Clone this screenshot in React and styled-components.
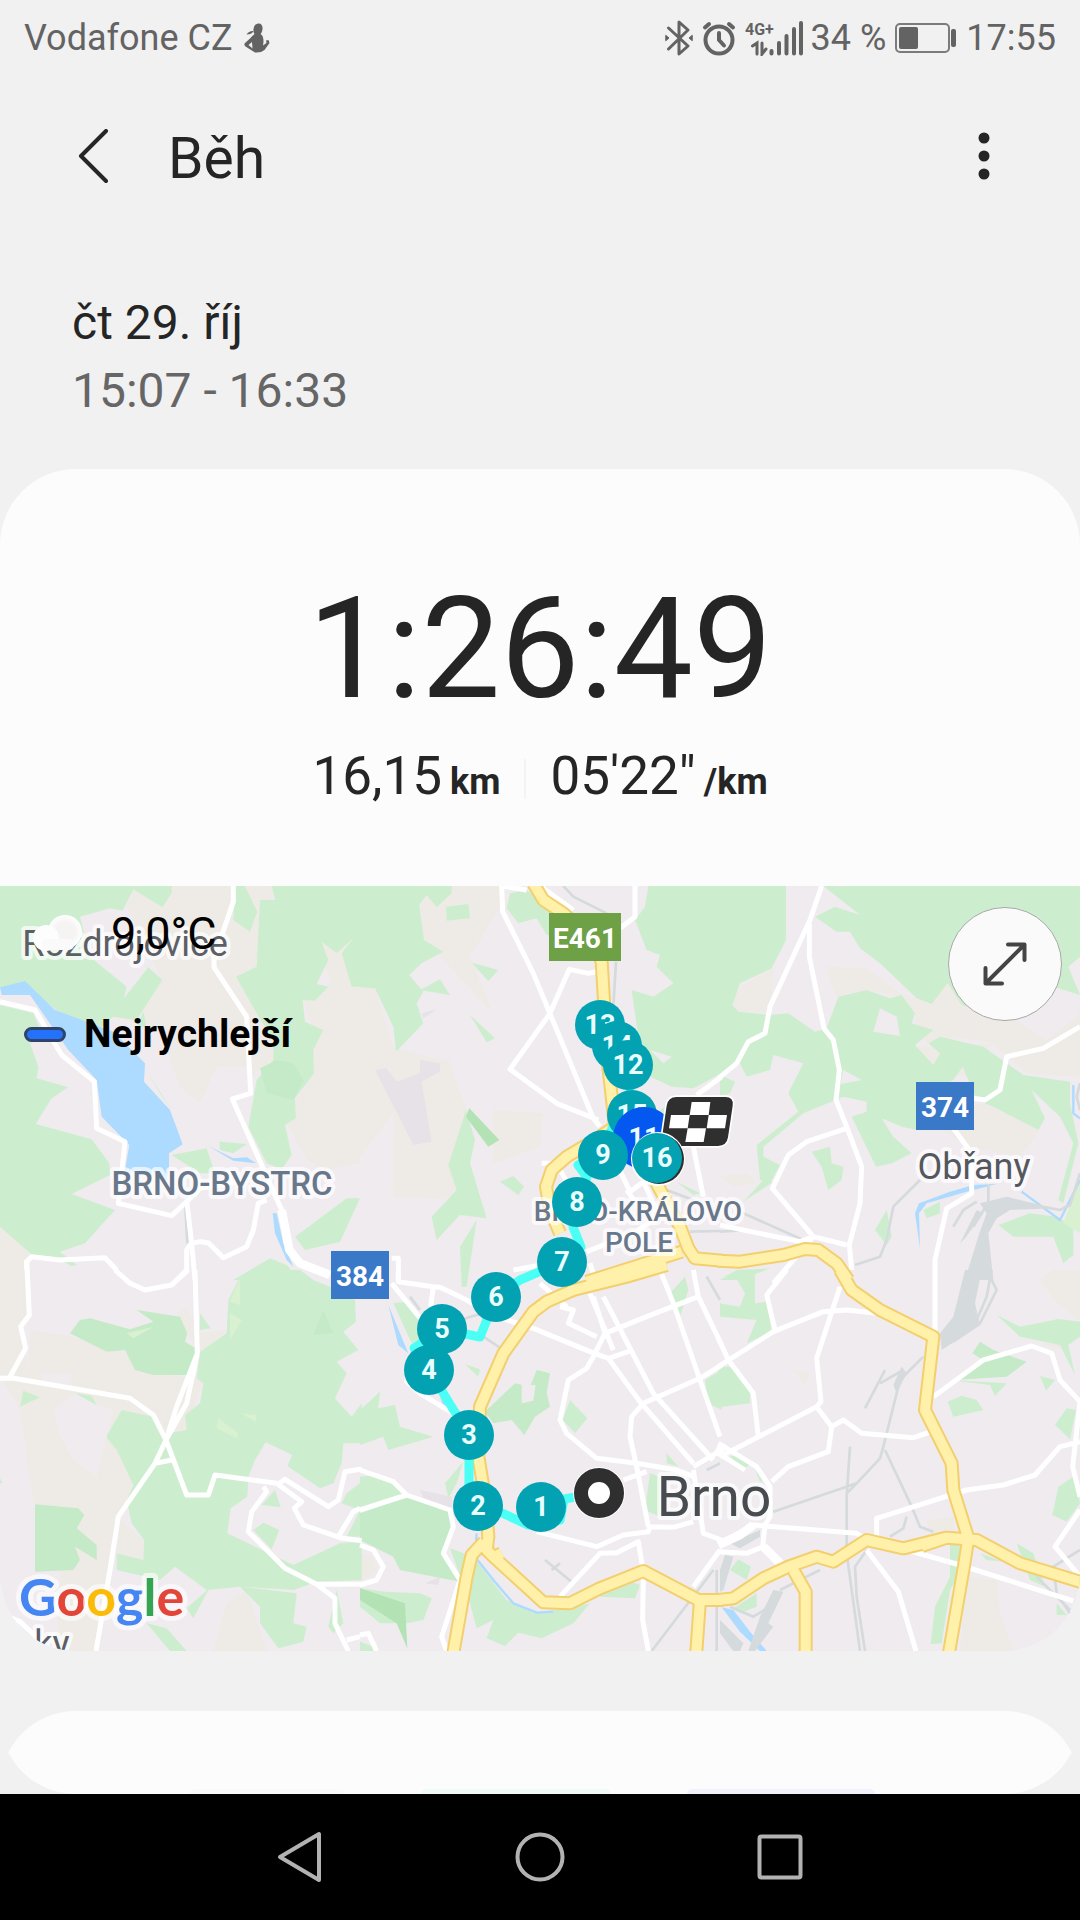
import React from 'react';
import styled, { createGlobalStyle } from 'styled-components';

// Terrain is stored per tile, in 3x units, local to the tile's own origin.
const tiles = [
  {
    x: 0,
    y: -18,
    beige:
      'M400,18H700L640,260L740,410L740,560L650,560L600,670L540,620L470,440L330,410L480,290L380,80Z M700,18H825L770,260L710,290L770,390L820,480L820,540L750,590L740,410L642,262Z M960,180L1080,200V850L980,870L920,840L860,730L890,660L940,580L945,470L910,360L990,310Z M0,1040L90,1115L75,1170H0Z',
    green:
      'M0,18H515V40L487,82L400,28L368,92L330,85L240,110L270,230L380,320L372,355L445,262L487,300L410,420L340,410L300,445L180,400L90,325H0Z M0,375L100,400L130,470L90,490L115,560L110,595L205,622L155,655L107,732L275,778L328,850L330,885L215,942L345,990L255,1090L180,1115L230,1155L215,1158L160,1130L100,1128L0,1040Z M780,60H825L815,18H1080V320L1055,320L1025,220L1060,175L1010,220L965,185L985,240L950,312L985,320L945,362L908,360L915,425L970,450L940,510L942,580L885,655L888,715L855,735L875,825L845,868L800,850L745,740L770,600L820,540L820,480L770,400L708,290L770,260Z M705,18H735L772,95L750,155L700,120Z M515,825L620,805L645,880H600Z M658,785L740,792L700,820L660,810Z M1080,955H1040L885,1070L915,1110L1020,1085Z M700,1200L810,1135L860,1155L900,1200Z M430,395L440,440H410Z M445,580L515,690L480,640Z',
    deep: 'M780,565L830,540L880,550L910,600L880,660L800,640Z',
    water:
      'M0,322L75,303L165,390L340,455L435,550L432,605L510,690L548,793L507,820V860L500,900L375,870L388,795L305,710L290,600L205,510L90,345H5Z M625,798L700,835L740,832L770,850L700,842Z M818,1000H830L850,1090L880,1160L860,1140L825,1060Z',
    rail: 'M556,980L562,1090',
    road:
      'M700,18V65L642,235V262L740,410L752,640L697,657L845,990L868,1110L900,1150L990,1185 M0,365L105,390L185,525L283,605L290,745L375,785L355,970L515,1007L565,960L600,925L740,900 M560,960L575,1090L560,1110V1170L515,1215 M575,1090L600,1085L625,1088L670,1133L740,1100L760,1050L775,970L800,960 M80,1170V1145L95,1130L180,1140L315,1133L350,1170 M575,1090L585,1200',
    wide: 'M845,990L868,1110L900,1150L990,1185',
  },
  {
    x: 1080,
    y: -18,
    beige:
      'M180,60L275,18H420V80L330,230L400,400L250,240L190,180Z M0,320L45,325L100,500L200,530L265,540L320,690L270,850L320,960L100,950V700L0,830Z M400,690L550,700L540,800L400,850Z',
    shade:
      'M45,570L80,565L110,605L180,580V540L240,550V575L185,605L215,785L160,795Z M185,400L230,388L190,415Z',
    green:
      'M0,18H275V40L230,82L200,45L178,75L192,180L250,215L185,250L148,285L190,335L170,370L190,430L108,515L100,440L45,325L0,322Z M258,80L325,72L330,115L260,122Z M335,248L415,270L385,303Z M180,330L240,298L270,345Z M450,40L500,30L520,45L560,80L620,110V170L560,165L530,115L475,130L440,85Z M330,405L405,475L380,487Z M318,690L345,780L330,850L380,1015L300,1005L230,1080L215,1010L290,930L265,855Z M420,905L460,888L492,920L475,945Z M350,1020L320,1220H305L300,1100Z M865,18H1085V580L1000,625L935,620L850,580L815,330L880,350L940,310L890,260L900,225L860,210L825,120L855,80Z M900,690L925,675V720Z M950,905L1020,940L1000,945Z',
    dark: 'M328,685L418,780L385,800L318,710Z',
    land: 'M870,510L935,530L910,550Z',
    rail: 'M610,18L640,50L740,100 M768,245L760,380 M990,1055L1080,1053 M920,930L1000,960',
    road:
      'M425,18L428,95L520,280L700,715L720,740 M825,18V110L780,145 M425,18L500,30 M710,275L685,280L628,268L570,400L450,568L590,670L715,720 M540,18L640,90 M545,850H590L620,905 M760,830L810,935L850,905L890,990 M1000,800L1030,950 M680,1115L820,1060L880,1020 M800,930L850,1000 M1010,645L1085,590 M460,1170L545,1155 M95,1135H115V1190 M690,1150L700,1180',
    highway:
      'M520,10L550,60L610,100L700,180L725,245L733,380L745,560L765,740L720,770L620,830L575,870L558,920L570,990L600,1060 M830,780L895,920L960,1040L985,1105L1005,1135L1085,1142 M680,1205L760,1180L965,1115',
  },
  {
    x: 2160,
    y: -18,
    beige:
      'M40,370L60,320L160,265L150,400L50,395Z M320,260L440,265L540,340L590,360L680,310L740,380L850,400L980,480L1080,400V590L920,580L820,490L700,470L620,490L590,440L585,400L540,350L440,330L340,350Z M580,500L820,490L760,600L640,560Z M600,700L800,670L960,750L900,830L740,800Z M0,890L80,880L110,910L40,920Z',
    green:
      'M0,18H198V180L155,265L60,310L38,375L55,395L150,405L205,400L285,455L320,445L355,350L440,330L510,355L545,345L585,400L575,430L640,450L585,495L640,555L660,520L625,490L660,470L790,500L910,585L1050,605V670L1075,790L1030,970L1015,960L1060,790L1020,710L935,630L975,715L955,750L820,680L770,660L728,560L700,600L590,650V750L545,740L485,715L520,770L575,820L515,850L468,860L395,710L440,695V665L370,650L250,700L130,800V830L180,855L150,910L120,900L110,795L235,695L205,640L250,550L160,525L150,570L80,590L60,550L0,585Z M310,18H1080V230L1045,260L1080,345L1000,320L850,380L760,350L740,380L725,375L683,310L635,372L590,355L480,250L420,205L390,155H350L285,110L345,80L420,105Z M275,815L330,800L335,850L370,860L365,900L325,930L305,860Z M70,965L130,900L160,905Z M500,990L515,1070L500,1095L465,1050Z M610,990L660,965V1000L620,1015Z M835,1035L930,1000L1010,1010L1060,1040V1125L1030,1150L1000,1070L880,1070Z M0,585L45,605L30,640L0,650Z M50,1170L150,1165L60,1200H0Z',
    light: 'M1030,1030L1080,900V1060Z',
    land:
      'M480,385L530,410L540,468L460,455Z M370,570L425,600L362,612Z M310,250L350,350L320,445L290,330Z',
    water: 'M597,970L690,935L760,915L830,912L740,935L620,970L597,1000L600,1105L585,1000Z',
    stream: 'M905,935L1020,1020L1080,900 M1060,615V700L1080,715',
    yard: 'M778,1060L800,1000L830,1015L805,1060L820,1200H735Z M770,990L720,1090L735,1075L790,1000Z M780,970L860,950L1000,985L870,990L830,1015L800,1000Z',
    rail:
      'M600,900L520,980L500,1080L480,1130L405,1155 M70,1000L250,1080 M0,1055L80,1050 M860,960L1020,990L1050,975L1080,880 M1080,610L1070,650L1080,690 M805,915V1000 M770,965L730,990L700,1040 M800,975L760,1040',
    road:
      'M305,18L270,120L150,380L135,460L85,485L50,550L-5,595 M268,130V230L312,445L340,480L358,570L348,660L380,740L425,860L420,970L388,1095L395,1170 M380,745L260,785L205,825L157,925L280,1070L380,1095 M0,1035L60,1048L240,1085L280,1070L160,1210 M1080,440L970,505L860,530L840,630L795,660L760,655 M700,745L755,820V940L680,985L645,1140V1170',
    highway: 'M-5,1142L60,1145L190,1125L255,1107L295,1110L350,1150L385,1200',
  },
  {
    x: 0,
    y: 1152,
    beige:
      'M0,0H75L90,130L60,170L85,300L300,340L450,430L500,480L400,640L360,730L310,950L290,1143H170L180,900L240,880L100,700L60,420L0,320Z M90,180L220,200L320,240L370,240L420,310L560,320L610,330L560,480L500,480L450,430L390,385L85,320Z M360,745L430,810V870L350,850Z M530,130L560,110L600,190L680,180L620,245L590,240Z M680,1000L740,960L800,1143H640Z',
    land:
      'M160,420L225,370L290,405L340,420L290,620L220,570L180,500Z M0,430L60,420L50,500L0,540Z M0,640L60,640L100,760V905L60,940L0,940Z M120,310L210,310L220,350L130,335Z',
    green:
      'M600,130L632,175L600,180Z M60,410L70,362L120,382Z M225,370L275,378L290,405L247,470Z M720,20L780,0H900L940,30L990,50L1065,90L1068,155L1030,185L1075,240L1010,275L1040,310L1005,385L1055,440L1085,400V520H1030L1025,580L1000,640L960,655L862,588L877,555L797,517L765,570L745,620L742,680L692,715L682,790L880,885L1020,820L1085,815V930L950,935L880,960L720,950L620,960L525,890L480,930L350,900V850L430,870L432,810L395,760L380,690L400,645L350,540L318,500L365,420L460,440L500,490L560,480L555,435L600,400L610,340L590,325L600,245L680,190L685,90Z M720,950L780,1010V1060L835,1135L910,1115L920,1070L880,1060L890,970Z M785,705L825,660L842,712Z M760,780L790,758L838,780L815,838Z M440,1060L500,1075L560,1143H510Z M560,1015L628,955L580,1045Z M1040,800L1080,720V800Z M1010,960L1030,1060L1000,1090L985,1070Z M1080,640L1040,670L1025,700L1080,720Z M0,625L8,640L0,645Z',
    deep:
      'M210,190L240,150L270,145L390,178L460,155L410,120L540,140L562,190L555,215L595,240L570,315H460L405,300L375,240L320,245Z M105,703L235,715L253,735L230,775L290,825V870L225,830L240,870L220,900L105,905Z M970,120L1000,190L940,195Z',
    light:
      'M690,130L725,150L690,210Z M690,95L720,20V105Z M655,445L715,490L710,505L650,475Z M722,430L768,435V455Z M380,190L460,170L400,205Z',
    road:
      'M80,-30L88,135L62,170L77,235L30,320 M0,325H40L390,385L460,435L498,510L560,675H625L645,615L830,640L905,695L883,715L910,765L1020,803L1085,812 M585,0L592,250L560,400L498,510L465,580L355,740L330,900L288,1143 M592,250L530,410L498,510 M465,580L515,570 M345,0L390,40L435,60L515,45L565,0 M830,645L855,628L985,710L1015,690L1035,605L1085,597 M790,650L800,665L755,725L745,785L855,895L950,943H1085 M950,943L1005,985V1060L1045,1143 M1040,1110L1080,1100 M1015,800L1060,725L1080,715 M0,1030L60,1055L130,1120',
  },
  {
    x: 1080,
    y: 1152,
    beige: 'M485,350L525,345L520,395L485,400Z M0,850L40,860L50,900L0,940Z',
    shade: 'M180,660L275,680V715L190,685Z M195,940L240,920L235,945Z',
    green:
      'M100,100L145,95L185,150L190,200L155,220Z M0,420L60,365L55,415L105,405L120,470L220,500L85,540L70,500L0,525Z M315,283L360,298L355,320Z M630,390L682,445L645,490L608,450Z M925,75L975,20L985,60L960,140Z M255,640L310,575L290,640L265,685Z M0,620L60,615L140,670L0,715Z M0,955L75,965L180,970L215,985L190,1050L140,1060L60,1060L0,1010Z M270,835L340,860L440,990L520,1030L650,1010L690,1000L640,1060L545,1105L475,1088L435,1128L380,1105L400,1050L350,1075L330,1000Z M700,960L800,930L840,945L825,985L720,980Z M870,610L900,620V740L855,720Z M920,550L955,590L920,580Z M1035,330L1085,300V420L1045,400Z M0,1115L40,1130V1143H0Z',
    deep:
      'M375,425L465,340L510,350L530,300L570,310L560,370L570,410L525,440L493,495L455,450L400,460Z M0,730L140,680L285,730L250,850L300,935L120,900L100,860L0,810Z',
    land: 'M485,345L527,345L520,392L485,400Z',
    dark: 'M0,955L135,1000L142,1135L110,1060L0,990Z',
    water: 'M85,105L120,190L145,250L115,225Z M240,380L290,430L250,410Z',
    stream: 'M350,790L345,860L400,930L460,1000L530,1028L580,1025',
    rail:
      'M555,870L640,940 M575,900L600,880 M875,1143L1060,900 M1070,900V1143 M370,200L430,240 M150,80L180,120 M300,150L400,120 M1040,20L1080,90 M1040,600L1080,580',
    road:
      'M115,0V35L220,50L240,52L300,80L410,140L520,175L690,245L745,265L820,240 M95,40L185,150 M220,50L212,110 M700,80L735,190L700,260L680,295L625,330L600,450L620,490L710,565L830,580L950,600L1000,620 M730,80L880,370L1060,570 M690,70L760,240 M745,265L840,395L1000,580 M900,0L940,100L1020,330L1080,500 M735,190L860,140L1015,80L1000,0 M1085,285L1020,325L850,400L815,440L810,500L830,590L865,770 M1015,80L1085,225 M600,110L640,120L625,160L710,200 M145,290L140,335L180,370L280,430 M0,600L100,635L140,675L270,720L280,770L250,850L300,930L245,1100L260,1143 M0,720L140,675 M0,825L40,840L70,890L50,930L0,945 M530,785L710,830L790,795L865,785L870,770L940,772L1000,755 M600,980L720,850L770,848L835,815L850,905L848,1050L865,1143 M1000,600L1030,790L1085,810 M1000,950L1080,840 M790,630L860,605 M0,1095L25,1090L50,1143 M540,40L620,110 M1000,590L1085,540',
    highway:
      'M920,-15L800,20L640,60L560,95L520,125L430,250L360,410L355,560L375,680L385,800L380,840L400,860L550,997L630,1000L720,955L850,903L1015,990L1085,990 M372,815L335,855L320,920L278,1160 M395,865L425,850 M1020,990L1008,1160',
  },
  {
    x: 2160,
    y: 1152,
    beige:
      'M740,920L830,930L840,1030L880,1143H720Z M960,30L1000,0H1080V150L1010,100Z M225,300L270,310L255,350Z M620,750L700,740V790H630Z M970,225L1030,200L1040,240Z',
    green:
      'M0,20L50,10L105,0V100L140,95L155,185L80,220L110,150L0,140V100L60,110L75,70L40,10Z M-5,290H40L90,355V400L-5,412Z M30,560L50,555L90,580L75,598Z M105,600L130,635L120,635Z M830,135L900,170L1015,147L1080,155V200L1045,225L1065,315L1020,225L900,200Z M690,330L860,340L825,378L810,345Z M683,395L725,377L770,390L790,420L700,440Z M960,318L1005,330L978,362Z M1040,415L1068,420L1050,508L1005,465Z M1060,620L1080,700L1040,755L997,735L1015,650Z M30,900L55,868L93,890L80,930Z M40,1015L110,970V1010L70,1025Z M690,820L725,830V900L690,960L665,1120L632,1122L645,1010L690,920Z M890,820L940,850L975,950L930,930Z M1010,1000L1040,1035H1010Z M780,850L850,875L800,870Z',
    deep: 'M780,215L820,240L920,275L860,320L700,330L760,300L790,270L757,250Z',
    water: 'M5,1012L40,1020L90,1085L140,1143H120L60,1085Z',
    yard: 'M735,0H785L765,100L780,165L665,240L660,190L700,140Z M545,290L560,310L530,370L520,345Z M0,1050L70,1120L60,1143H40L0,1090Z M160,960L190,965L145,1060L160,1070L105,1143H85L120,1040Z M30,820L120,780V800L60,835Z M15,855L40,860L10,960L0,965V900Z',
    rail:
      'M610,260L540,330L490,530L480,565L410,640L160,725 M550,300L480,340 M495,300L435,415 M390,530L380,680V850L420,1143 M495,540L575,710L600,770L640,785 M560,740L550,775L510,800 M380,670L410,640 M440,840L405,890L410,980L435,1143 M180,960L300,900 M1080,840L1000,890L1010,970L1050,1030 M30,1010L100,1040L150,1010 M950,920L1050,1020 M800,0L830,60L780,160L700,215 M815,0L800,80L770,150',
    road:
      'M-5,290L160,185L310,125L380,120L470,130 M200,0L140,75L165,180 M-5,205L25,270L100,370L115,500 M360,50L290,265L303,395L290,410L335,470L325,545L205,590L155,635 M0,560L290,410 M335,470L370,450L425,490L580,503L650,480 M640,380L790,270L935,228L995,250L1020,330L1080,395L1058,590L1080,680 M1080,515L1020,530L945,615L850,645L740,660L470,745V800 M-5,520L110,590L150,650V740L135,765L128,830 M-5,550L75,600 M0,820L100,765L410,790L460,820 M-5,845L80,850L130,830L190,890 M440,840L535,965L588,1143 M560,840L720,885L1060,993 M1080,720L1005,830L1080,920 M645,0V200',
    wide: 'M-5,825L60,795L100,765 M130,830L190,890 M-5,550L10,520',
    highway:
      'M360,0L395,60L480,120L640,200L615,420L650,490L695,580L700,660L745,805L730,900L685,1160 M-5,990L40,985L130,925L205,890L290,860L340,875L440,810L550,835L680,803L770,810L900,880L1085,937 M605,828L680,803 M220,900L257,965V1160',
  },
];

const layers = [
  { key: 'beige', fill: '#eeebe6' },
  { key: 'shade', fill: '#e7e2e8' },
  { key: 'green', fill: '#cdeece' },
  { key: 'deep', fill: '#c5eac7' },
  { key: 'dark', fill: '#b3e2b5' },
  { key: 'light', fill: '#d9f1d1' },
  { key: 'land', fill: '#efebef' },
  { key: 'water', fill: '#addaff' },
  { key: 'stream', stroke: '#addaff', width: 7 },
  { key: 'yard', fill: '#d5dadd' },
  { key: 'rail', stroke: '#d5dadd', width: 8 },
  { key: 'road', stroke: '#ffffff', width: 15 },
  { key: 'wide', stroke: '#ffffff', width: 26 },
  { key: 'highway', stroke: '#f3cf6e', width: 42 },
  { key: 'highway', stroke: '#fff1a9', width: 30 },
];

const route =
  'M599,1493L564,1499L560,1520L528,1525L500,1512L469,1500V1435L429,1370L414,1348L442,1329L480,1337L496,1297L520,1280L562,1262L581,1247L573,1227L577,1202L587,1177L578,1165L603,1155L612,1128L632,1115L628,1065L617,1046L600,1025';

const pins = [
  { n: 13, x: 600, y: 1025 },
  { n: 14, x: 617, y: 1046 },
  { n: 12, x: 628, y: 1065 },
  { n: 15, x: 632, y: 1115 },
  { n: 11, x: 644, y: 1138, fastest: true },
  { n: 9, x: 603, y: 1155 },
  { n: 8, x: 577, y: 1202 },
  { n: 7, x: 562, y: 1262 },
  { n: 6, x: 496, y: 1297 },
  { n: 5, x: 442, y: 1329 },
  { n: 4, x: 429, y: 1370 },
  { n: 3, x: 469, y: 1435 },
  { n: 2, x: 478, y: 1506 },
  { n: 1, x: 541, y: 1507 },
];

const places = [
  { text: 'Rozdrojovice', x: 125, y: 956, size: 36, color: '#5b5f66' },
  { text: 'BRNO-BYSTRC', x: 222, y: 1195, size: 33, color: '#68778a', bold: true },
  { text: 'BRNO-KRÁLOVO', x: 638, y: 1221, size: 28, color: '#68778a', bold: true },
  { text: 'POLE', x: 639, y: 1252, size: 28, color: '#68778a', bold: true },
  { text: 'Obřany', x: 974, y: 1179, size: 36, color: '#54585e' },
  { text: 'Brno', x: 714, y: 1516, size: 55, color: '#484b4f' },
  { text: 'ky', x: 52, y: 1656, size: 36, color: '#5b5f66' },
];

const shields = [
  { text: 'E461', x: 549, y: 913, width: 72, color: '#6ea045' },
  { text: '374', x: 916, y: 1082, width: 58, color: '#3a78c8' },
  { text: '384', x: 331, y: 1251, width: 58, color: '#3a78c8' },
];

const logo = [
  ['G', '#4686f2'],
  ['o', '#e44539'],
  ['o', '#fabc09'],
  ['g', '#4686f2'],
  ['l', '#35a554'],
  ['e', '#e44539'],
];

const Pin = ({ n, x, y, fastest }) => (
  <g>
    <circle cx={x} cy={y} r={fastest ? 31 : 25} fill={fastest ? '#0458f0' : '#02a2b3'} />
    <PinText x={x} y={y + 9}>
      {n}
    </PinText>
  </g>
);

const RouteMap = () => (
  <MapSvg viewBox='0 0 1080 765' role='img' aria-label='Mapa trasy'>
    <g transform='scale(0.333333)' strokeLinejoin='round'>
      {layers.map((layer) =>
        tiles.map((tile) =>
          tile[layer.key] ? (
            <path
              key={`${tile.x}-${tile.y}`}
              transform={`translate(${tile.x} ${tile.y})`}
              d={tile[layer.key]}
              fill={layer.fill || 'none'}
              stroke={layer.stroke}
              strokeWidth={layer.width}
            />
          ) : null
        )
      )}
    </g>
    <g transform='translate(0 -886)'>
      {places.map((place) => (
        <PlaceText
          key={place.text}
          x={place.x}
          y={place.y}
          $size={place.size}
          $color={place.color}
          $bold={place.bold}
        >
          {place.text}
        </PlaceText>
      ))}
      {shields.map((shield) => (
        <g key={shield.text}>
          <rect x={shield.x} y={shield.y} width={shield.width} height='48' fill={shield.color} />
          <ShieldText x={shield.x + shield.width / 2} y={shield.y + 35}>
            {shield.text}
          </ShieldText>
        </g>
      ))}
      <path d={route} fill='none' stroke='#4bfff5' strokeWidth='9' strokeLinejoin='round' />
      {pins.map((pin) => (
        <Pin key={pin.n} {...pin} />
      ))}
      <g transform='translate(520 980) scale(0.333333)'>
        <path
          d='M470,351H616Q642,351 638,377L624,472Q620,498 594,498H448Q422,498 426,472L440,377Q444,351 470,351Z'
          fill='#2f2f2f'
          stroke='#fff'
          strokeWidth='10'
          paintOrder='stroke'
        />
        <path
          d='M515,366H571L566,405H509Z M453,405H509L503,445H447Z M566,405H621L615,445H560Z M503,445H558L551,486H496Z'
          fill='#fff'
        />
      </g>
      <circle cx='658' cy='1159' r='27' fill='#fff' />
      <circle cx='659' cy='1159' r='25' fill='#2f2f2f' />
      <Pin n={16} x={657} y={1158} />
      <circle cx='599' cy='1493' r='26' fill='#fff' />
      <circle cx='599' cy='1493' r='18' fill='#fff' stroke='#2f2f2f' strokeWidth='14' />
      <LogoText x='19' y='1616'>
        {logo.map(([letter, color], i) => (
          <tspan key={i} fill={color}>
            {letter}
          </tspan>
        ))}
      </LogoText>
    </g>
  </MapSvg>
);

const App = () => {
  return (
    <Page>
      <GlobalStyle />
      <StatusBar>
        <StatusGroup $gap={12}>
          <span>Vodafone CZ</span>
          <svg width='26' height='30' viewBox='0 0 26 30' fill='#636363'>
            <path d='M14,0.500C17,0 19,2.500 18.500,6C18.300,8.500 17.500,10 16.500,11C19,12.500 19.500,15 19.500,19L19,22.500L22.500,20L22,17.500L24.500,17L25.500,20L20.500,27Q17,30 11,29.500L1.500,23.500Q-0.500,22 1,20L6,15.500Q8,13 10.500,11Q9,9 9.500,6Q10,1 14,0.500Z' />
            <path d='M2.500,11.500Q5,7.500 9.500,8Q8,11.500 2.500,11.500Z' />
            <path d='M8,19L4.500,22L8.500,25.500Z' fill='#f1f1f1' />
          </svg>
        </StatusGroup>
        <StatusGroup $gap={9}>
          <svg width='28' height='36' viewBox='0 0 28 36' fill='none' stroke='#636363' strokeWidth='3' strokeLinecap='round' strokeLinejoin='round'>
            <path d='M3.500,8L23,26L14,34V2L23,10L3.500,29' />
            <path d='M1,15.500L4,18L1,20.500Z M27,15.500L24,18L27,20.500Z' fill='#636363' strokeWidth='1' />
          </svg>
          <svg width='34' height='36' viewBox='0 0 34 36' fill='none' stroke='#636363' strokeWidth='4' strokeLinecap='round' strokeLinejoin='round'>
            <circle cx='17' cy='20' r='13.500' />
            <path d='M17,13V20L22,25.500M3,7.500L7,4M31,7.500L27,4' />
          </svg>
          <Signal>
            <svg width='58' height='36' viewBox='0 0 58 36' fill='none' stroke='#636363' strokeLinecap='round'>
              <SignalText x='0' y='15'>
                4G+
              </SignalText>
              <path d='M7.500,26L12,23V34M17,23V34L21,29' strokeWidth='3' />
              <path d='M26.500,31V33.500M34,23V33.500M41.500,16V33.500M49,9V33.500M56,3V33.500' strokeWidth='4' />
            </svg>
            <span>34 %</span>
          </Signal>
          <svg width='62' height='30' viewBox='0 0 62 30'>
            <rect x='1' y='1' width='53' height='28' rx='4' fill='none' stroke='#7b7b7b' strokeWidth='2' />
            <rect x='4' y='4' width='19' height='22' rx='2' fill='#636363' />
            <rect x='56' y='6' width='5' height='18' rx='2' fill='#636363' />
          </svg>
          <span>17:55</span>
        </StatusGroup>
      </StatusBar>

      <Header>
        <IconButton aria-label='Zpět'>
          <svg width='32' height='56' viewBox='0 0 32 56' fill='none' stroke='#252525' strokeWidth='4' strokeLinecap='round' strokeLinejoin='round'>
            <path d='M28,2L3,27L28,52' />
          </svg>
        </IconButton>
        <Title>Běh</Title>
        <IconButton aria-label='Další možnosti'>
          <svg width='12' height='50' viewBox='0 0 12 50' fill='#252525'>
            <circle cx='6' cy='6' r='5.500' />
            <circle cx='6' cy='24' r='5.500' />
            <circle cx='6' cy='42' r='5.500' />
          </svg>
        </IconButton>
      </Header>

      <When>
        <Day>čt 29. říj</Day>
        <Hours>15:07 - 16:33</Hours>
      </When>

      <Card>
        <Duration>1:26:49</Duration>
        <Stats>
          <Stat>
            16,15<Unit>km</Unit>
          </Stat>
          <Divider />
          <Stat>
            05'22"<Unit>/km</Unit>
          </Stat>
        </Stats>
        <MapArea>
          <RouteMap />
          <Legend>
            <LegendRow $gap={27}>
              <svg width='60' height='40' viewBox='0 0 60 40'>
                <defs>
                  <radialGradient id='cloud'>
                    <stop offset='0.600' stopColor='#f6f4f3' />
                    <stop offset='1' stopColor='#ffffff' />
                  </radialGradient>
                </defs>
                <circle cx='41' cy='19' r='17' fill='url(#cloud)' />
                <circle cx='22' cy='25' r='13' fill='#fdfdfd' />
                <rect x='18' y='26' width='32' height='11' rx='5' fill='#fbfafa' />
              </svg>
              <Temperature>9,0°C</Temperature>
            </LegendRow>
            <LegendRow $gap={18}>
              <Swatch />
              <LegendText>Nejrychlejší</LegendText>
            </LegendRow>
          </Legend>
          <ExpandButton aria-label='Zvětšit mapu'>
            <svg width='44' height='44' viewBox='0 0 44 44' fill='none' stroke='#444' strokeWidth='4' strokeLinecap='round' strokeLinejoin='round'>
              <path d='M3,41L41,3M25,2.500H41.500V18M2.500,26V41.500H19' />
            </svg>
          </ExpandButton>
        </MapArea>
      </Card>

      <NextCard>
        <NextCardBody>
          <Chip $width={155} $color='#f8f9fb' />
          <Chip $width={190} $color='#f0faf7' />
          <Chip $width={188} $color='#f1f1fb' />
        </NextCardBody>
      </NextCard>

      <NavBar>
        <NavButton aria-label='Zpět'>
          <svg width='46' height='52' viewBox='0 0 46 52' fill='none' stroke='#b2b2b2' strokeWidth='4' strokeLinejoin='round'>
            <path d='M42,3V49L3,26Z' />
          </svg>
        </NavButton>
        <NavButton aria-label='Domů'>
          <svg width='50' height='50' viewBox='0 0 50 50' fill='none' stroke='#b2b2b2' strokeWidth='4'>
            <circle cx='25' cy='25' r='22.500' />
          </svg>
        </NavButton>
        <NavButton aria-label='Přehled'>
          <svg width='46' height='46' viewBox='0 0 46 46' fill='none' stroke='#b2b2b2' strokeWidth='4'>
            <rect x='2.500' y='2.500' width='41' height='41' rx='2' />
          </svg>
        </NavButton>
      </NavBar>
    </Page>
  );
};

export default App;

const GlobalStyle = createGlobalStyle`
  * {
    box-sizing: border-box;
  }
  body {
    margin: 0;
    background-color: #f1f1f1;
    color: #252525;
    font-family: Roboto, sans-serif;
  }
  svg {
    display: block;
    flex-shrink: 0;
  }
`;

const Page = styled.div`
  display: flex;
  flex-direction: column;
  min-height: 100vh;
`;

const StatusBar = styled.div`
  display: flex;
  align-items: center;
  justify-content: space-between;
  height: 76px;
  padding: 0 24px;
  color: #636363;
  font-size: 36px;
`;

const StatusGroup = styled.div`
  display: flex;
  align-items: center;
  gap: ${(props) => props.$gap}px;
`;

const Signal = styled.div`
  display: flex;
  align-items: center;
  gap: 8px;
`;

const SignalText = styled.text`
  fill: #636363;
  stroke: none;
  font-size: 16px;
  font-weight: 700;
`;

const Header = styled.header`
  display: flex;
  align-items: center;
  height: 162px;
  padding: 0 74px 0 72px;
`;

const IconButton = styled.button`
  display: flex;
  align-items: center;
  justify-content: center;
  width: 44px;
  height: 72px;
  padding: 0;
  border: none;
  background: none;
  cursor: pointer;
`;

const Title = styled.h1`
  flex: 1;
  margin: 0 0 0 52px;
  padding-top: 2px;
  font-size: 57px;
  font-weight: 400;
`;

const When = styled.div`
  padding: 51px 72px 44px;
  font-size: 48px;
  line-height: 68px;
`;

const Day = styled.div``;

const Hours = styled.div`
  color: #666;
`;

const Card = styled.section`
  padding-top: 100px;
  border-radius: 76px;
  background-color: #fcfcfc;
  overflow: hidden;
`;

const Duration = styled.div`
  font-size: 141px;
  line-height: 160px;
  text-align: center;
`;

const Stats = styled.div`
  display: flex;
  justify-content: center;
  gap: 24px;
  margin: 15px 0 72px;
  font-size: 53px;
  line-height: 64px;
`;

const Stat = styled.div`
  display: flex;
  align-items: baseline;
  gap: 8px;
`;

const Unit = styled.span`
  font-size: 36px;
  font-weight: 700;
`;

const Divider = styled.div`
  align-self: center;
  width: 2px;
  height: 40px;
  background-color: #f4f4f4;
`;

const MapArea = styled.div`
  position: relative;
  background-color: #efebef;
`;

const MapSvg = styled.svg`
  width: 100%;
  height: auto;
`;

const PlaceText = styled.text`
  fill: ${(props) => props.$color};
  font-size: ${(props) => props.$size}px;
  font-weight: ${(props) => (props.$bold ? 500 : 400)};
  text-anchor: middle;
  stroke: rgba(255, 255, 255, 0.7);
  stroke-width: 8px;
  stroke-linejoin: round;
  paint-order: stroke;
`;

const ShieldText = styled.text`
  fill: #fff;
  font-size: 28px;
  font-weight: 700;
  text-anchor: middle;
`;

const PinText = styled.text`
  fill: #e9ffff;
  font-size: 27px;
  font-weight: 700;
  text-anchor: middle;
`;

const LogoText = styled.text`
  font-family: Lato, sans-serif;
  font-size: 52px;
  font-weight: 700;
  stroke: rgba(255, 255, 255, 0.6);
  stroke-width: 10px;
  stroke-linejoin: round;
  paint-order: stroke;
`;

const Legend = styled.div`
  position: absolute;
  top: 17px;
  left: 24px;
  display: flex;
  flex-direction: column;
  gap: 41px;
  color: #000;
`;

const LegendRow = styled.div`
  display: flex;
  align-items: center;
  gap: ${(props) => props.$gap}px;
  height: 60px;
`;

const Temperature = styled.span`
  font-size: 45px;
`;

const Swatch = styled.span`
  width: 42px;
  height: 15px;
  border: 3px solid #2f4468;
  border-radius: 8px;
  background-color: #2472fb;
`;

const LegendText = styled.span`
  font-size: 39px;
  font-weight: 700;
`;

const ExpandButton = styled.button`
  position: absolute;
  top: 21px;
  right: 18px;
  display: flex;
  align-items: center;
  justify-content: center;
  width: 114px;
  height: 114px;
  padding: 0;
  border: 1px solid #a8a8a8;
  border-radius: 50%;
  background-color: #fafafa;
  cursor: pointer;
`;

const NextCard = styled.section`
  margin-top: 60px;
  border-radius: 76px 76px 0 0;
  overflow: hidden;
`;

const NextCardBody = styled.div`
  display: flex;
  align-items: flex-end;
  justify-content: center;
  gap: 76px;
  height: 83px;
  padding-right: 16px;
  border-radius: 0 0 76px 76px;
  background-color: #fcfcfc;
`;

const Chip = styled.div`
  width: ${(props) => props.$width}px;
  height: 5px;
  border-radius: 16px 16px 0 0;
  background-color: ${(props) => props.$color};
`;

const NavBar = styled.nav`
  display: flex;
  justify-content: center;
  flex: 1;
  min-height: 126px;
  background-color: #000;
`;

const NavButton = styled.button`
  display: flex;
  align-items: center;
  justify-content: center;
  width: 240px;
  padding: 0;
  border: none;
  background: none;
  cursor: pointer;
`;
